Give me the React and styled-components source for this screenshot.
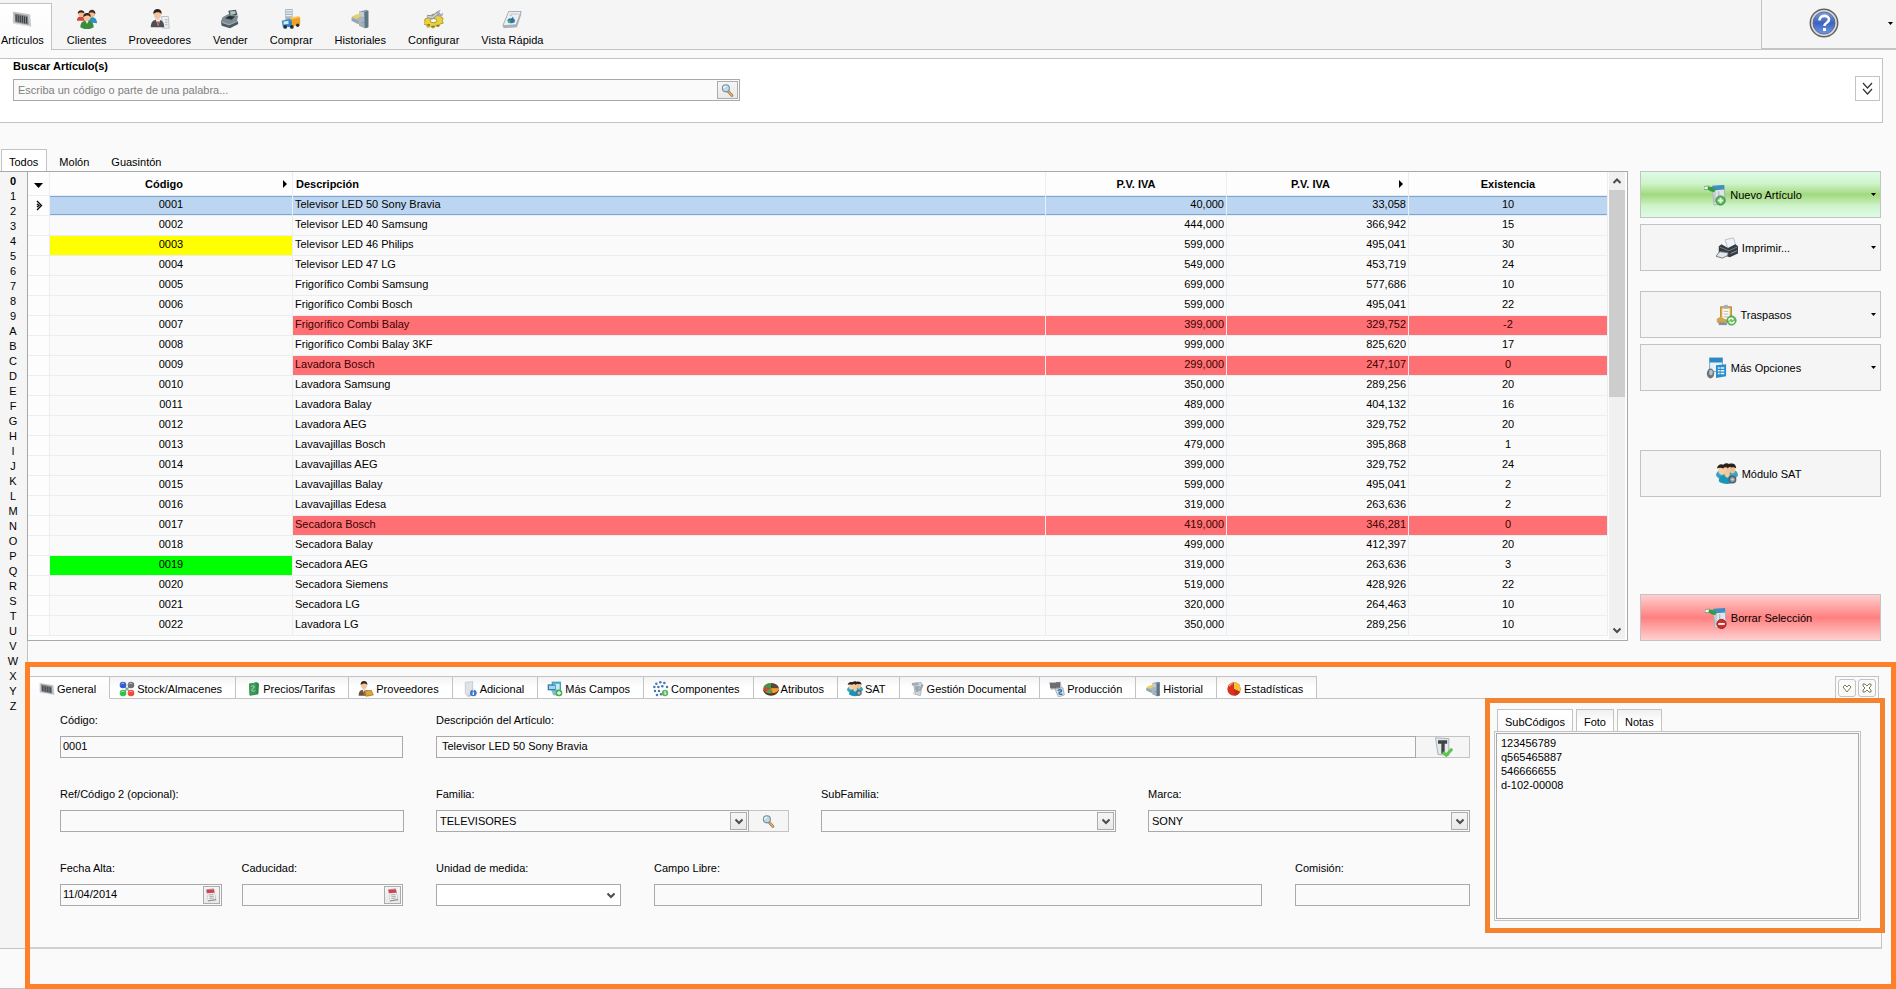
import React, { useState } from 'react';
import styled, { createGlobalStyle, css, ThemeProvider } from 'styled-components';

const theme = {
  page: '#fafafa',
  bar: '#f5f5f5',
  white: '#ffffff',
  line: '#c3c3c3',
  field: '#a9a9a9',
  cellLine: '#ebeef1',
  accent: '#ff8029',
  accentInner: '#f4822f',
  selected: '#bcd6f1',
  selectedLine: '#7ba6d6',
  red: '#ff7074',
  yellow: '#ffff00',
  green: '#00ff00'
};

const GlobalStyle = createGlobalStyle`
  * {
    box-sizing: border-box;
  }

  body {
    margin: 0;
    background: #fafafa;
    color: #000;
    font-family: 'Liberation Sans', Arial, sans-serif;
    font-size: 11px;
    line-height: 14px;
  }

  button, input, select {
    margin: 0;
    padding: 0;
    border: 0;
    border-radius: 0;
    background: none;
    color: inherit;
    font: inherit;
  }
`;

const Page = styled.div`
  display: flex;
  flex-direction: column;
  min-height: 100vh;
`;

/* ---------- top bar ---------- */

const TopBar = styled.header`
  display: flex;
  justify-content: space-between;
  height: 50px;
  background: ${props => props.theme.bar};
  border-bottom: 1px solid ${props => props.theme.line};
`;

const Menu = styled.nav`
  display: flex;
  padding-top: 3px;
`;

const MenuButton = styled.button`
  display: flex;
  flex-direction: column;
  align-items: center;
  gap: 4px;
  padding: 6px 11px 2px;

  ${props => props.$active && css`
    margin: 0 4px -1px 0;
    padding: 5px 7px 2px 1px;
    background: linear-gradient(#ffffff, #fafafa);
    border: 1px solid ${props.theme.line};
    border-left: 0;
    border-bottom: 0;
  `}
`;

const HelpButton = styled.button`
  display: flex;
  align-items: center;
  justify-content: space-between;
  width: 135px;
  height: 49px;
  padding: 0 3px 2px 47px;
  border-left: 1px solid ${props => props.theme.line};
  border-bottom: 1px solid ${props => props.theme.line};
`;

/* ---------- search ---------- */

const SearchPanel = styled.section`
  display: flex;
  justify-content: space-between;
  margin: 8px 13px 0 0;
  padding: 0 2px 21px 13px;
  background: ${props => props.theme.white};
  border: 1px solid ${props => props.theme.line};
  border-left: 0;
`;

const SearchColumn = styled.div`
  display: flex;
  flex-direction: column;
  gap: 6px;
  width: 727px;
`;

const SearchLabel = styled.label`
  font-weight: bold;
`;

const SearchBox = styled.div`
  display: flex;
  align-items: center;
  height: 22px;
  padding: 0 1px 0 4px;
  background: ${props => props.theme.page};
  border: 1px solid ${props => props.theme.field};

  input {
    flex: 1;
    min-width: 0;
    outline: none;
  }

  input::placeholder {
    color: #808080;
    opacity: 1;
  }
`;

const InsetButton = styled.button`
  display: flex;
  align-items: center;
  justify-content: center;
  width: ${props => props.$width || 17}px;
  height: 18px;
  background: linear-gradient(#f5f5f5, #e9e9e9);
  border: 1px solid #acacac;
`;

const ExpandButton = styled.button`
  display: flex;
  align-items: center;
  justify-content: center;
  width: 25px;
  height: 25px;
  margin-top: 17px;
  border: 1px solid ${props => props.theme.line};
`;

/* ---------- list area ---------- */

const FilterTabs = styled.div`
  display: flex;
  height: 22px;
  margin: 26px 0 0 1px;
`;

const FilterTab = styled.button`
  padding: 4px 10px 0 12px;

  ${props => props.$active && css`
    padding: 3px 8px 0 7px;
    background: ${props.theme.white};
    border: 1px solid ${props.theme.line};
    border-bottom: 0;
  `}
`;

const Workspace = styled.div`
  display: flex;
  flex: 1;
`;

const RailColumn = styled.div`
  display: flex;
  flex-direction: column;
  width: 27px;
`;

const Rail = styled.nav`
  display: flex;
  flex: 1;
  flex-direction: column;
  padding-top: 1px;
  background: ${props => props.theme.bar};
  border-top: 1px solid ${props => props.theme.field};
  border-bottom: 1px solid ${props => props.theme.line};
`;

const RailLetter = styled.button`
  height: 15px;
  padding-right: 1px;
  font-weight: ${props => (props.$active ? 'bold' : 'normal')};
`;

const RailFoot = styled.div`
  height: 40px;
  border-bottom: 1px solid ${props => props.theme.line};
`;

const Content = styled.main`
  display: flex;
  flex: 1;
  flex-direction: column;
  min-width: 0;
`;

const ListRow = styled.div`
  display: flex;
  gap: 12px;
  padding: 0 15px 21px 0;
  border-left: 1px solid ${props => props.theme.line};
`;

const GridFrame = styled.div`
  display: flex;
  flex: 1;
  gap: 1px;
  min-width: 0;
  margin-left: -1px;
  padding: 0 2px 4px 0;
  background: #fdfdfd;
  border: 1px solid ${props => props.theme.field};
`;

const Table = styled.table`
  flex: 1;
  width: 100%;
  border-spacing: 0;
  table-layout: fixed;
`;

const HeadCell = styled.th`
  height: 24px;
  padding: 0 3px;
  text-align: ${props => props.$align || 'center'};
  border-right: 1px solid ${props => props.theme.cellLine};
  border-bottom: 1px solid ${props => props.theme.cellLine};
`;

const HeadLabel = styled.div`
  display: flex;
  align-items: center;
  gap: 8px;
  padding-right: 2px;

  span {
    flex: 1;
  }
`;

const Row = styled.tr`
  background: ${props => props.theme.page};
`;

const Cell = styled.td`
  height: 20px;
  padding: 0 2px 2px;
  overflow: hidden;
  white-space: nowrap;
  line-height: 17px;
  text-align: ${props => props.$align || 'left'};
  background: ${props => props.theme[props.$fill] || 'transparent'};
  background-clip: padding-box;
  border-right: 1px solid ${props => props.theme.cellLine};
  border-bottom: 1px solid ${props => props.theme.cellLine};
  ${props => props.$fill === 'red' && 'color: #3a0000;'}
  ${props => props.$fill === 'selected' && css`
    box-shadow: inset 0 1px ${props.theme.selectedLine}, inset 0 -1px ${props.theme.selectedLine};
  `}
`;

const MarkerCell = styled.td`
  padding: 0;
  text-align: center;
  background: #fdfdfe;
  border-right: 1px solid ${props => props.theme.cellLine};
  border-bottom: 1px solid ${props => props.theme.cellLine};

  svg {
    display: block;
    margin: 0 auto;
  }
`;

const ScrollBar = styled.div`
  display: flex;
  flex-direction: column;
  align-items: center;
  justify-content: space-between;
  width: 16px;
  margin-bottom: -3px;
  background: #f0f0f0;
`;

const ScrollThumb = styled.div`
  width: 100%;
  height: 207px;
  margin-bottom: auto;
  background: #cdcdcd;
`;

const ScrollButton = styled.button`
  display: flex;
  align-items: center;
  justify-content: center;
  width: 16px;
  height: 18px;
`;

/* ---------- action column ---------- */

const Actions = styled.aside`
  display: flex;
  flex-direction: column;
  gap: 20px;
  width: 241px;
`;

const ActionGroup = styled.div`
  display: flex;
  flex-direction: column;
  gap: 6px;
  margin-top: ${props => props.$top || '0'};
`;

const tones = {
  green: 'linear-gradient(#dcfce6, #d0f4cc 25%, #a3d97e 50%, #d0f4cc 76%, #dcfce6)',
  red: 'linear-gradient(#ffcfcf, #ff8080 50%, #ffd0d0)'
};

const ActionButton = styled.button`
  display: flex;
  align-items: center;
  height: 47px;
  padding-right: 4px;
  background: ${props => tones[props.$tone] || props.theme.bar};
  border: 1px solid ${props => props.theme.line};
`;

const ActionLabel = styled.span`
  display: flex;
  flex: 1;
  align-items: center;
  justify-content: center;
  gap: 4px;
  padding-right: ${props => (props.$menu ? 6 : 0)}px;
`;

/* ---------- detail panel ---------- */

const DetailFrame = styled.section`
  display: flex;
  flex: 1;
  flex-direction: column;
  margin-left: -2px;
  padding: 9px 9px 35px 0;
  background: ${props => props.theme.page};
  border: 5px solid ${props => props.theme.accent};
`;

const DetailHead = styled.div`
  display: flex;
  align-items: flex-start;
  justify-content: space-between;
  height: 23px;
  padding-right: 3px;
  border-bottom: 1px solid ${props => props.theme.line};
`;

const DetailTabs = styled.div`
  display: flex;
`;

const DetailTab = styled.button`
  display: flex;
  align-items: center;
  gap: 2px;
  height: 23px;
  padding: 2px 13px 0 9px;
  white-space: nowrap;
  background: linear-gradient(#f3f3f3, #ffffff 50%);
  border: 1px solid ${props => props.theme.line};
  border-left: 0;

  ${props => props.$active && css`
    background: linear-gradient(#ffffff, ${props.theme.page});
    border-bottom-color: ${props.theme.page};
  `}
`;

const WindowButtons = styled.div`
  display: flex;
  gap: 2px;
  height: 23px;
  padding: 2px;
  border: 1px solid ${props => props.theme.line};
  border-bottom: 0;
`;

const WindowButton = styled.button`
  display: flex;
  align-items: center;
  justify-content: center;
  width: 18px;
  height: 18px;
  border: 1px solid ${props => props.theme.line};
  border-radius: 3px;
`;

const DetailBody = styled.div`
  display: flex;
  align-items: flex-start;
  flex: 1;
  border-right: 1px solid ${props => props.theme.line};
  border-bottom: 2px solid #d0d0d0;
`;

const Form = styled.form`
  display: flex;
  flex: 1;
  flex-direction: column;
  gap: 29px;
  min-width: 0;
  padding: 14px 15px 0 30px;
`;

const FormRow = styled.div`
  display: grid;
  grid-template-columns: ${props => props.$columns};
  gap: ${props => props.$gap || 33}px;
`;

const Field = styled.div`
  display: flex;
  flex-direction: column;
  gap: 9px;
  min-width: 0;
`;

const FieldLine = styled.div`
  display: flex;
  height: 22px;
`;

const Box = styled.div`
  display: flex;
  flex: 1;
  align-items: center;
  min-width: 0;
  padding: 0 1px 0 0;
  background: ${props => props.theme.page};
  border: 1px solid ${props => props.theme.field};
`;

const TextInput = styled.input`
  flex: 1;
  align-self: stretch;
  width: 100%;
  min-width: 0;
  padding: 0 ${props => props.$inset || 2}px 2px;
  outline: none;
`;

const Combo = styled.div`
  display: grid;
  flex: 1;
  align-items: center;
  min-width: 0;
  background: ${props => (props.$plain ? props.theme.white : props.theme.page)};
  border: 1px solid ${props => props.theme.field};

  > * {
    grid-area: 1 / 1;
  }
`;

const Select = styled.select`
  width: 100%;
  height: 20px;
  padding: 0 20px 0 3px;
  appearance: none;
  outline: none;
`;

const ComboArrow = styled.span`
  display: flex;
  align-items: center;
  justify-content: center;
  justify-self: end;
  width: 17px;
  height: 18px;
  margin-right: 1px;
  pointer-events: none;

  ${props => !props.$plain && css`
    background: linear-gradient(#f5f5f5, #e9e9e9);
    border: 1px solid #acacac;
  `}
`;

const SideButton = styled.button`
  display: flex;
  align-items: center;
  justify-content: center;
  width: ${props => props.$width}px;
  background: ${props => props.theme.bar};
  border: 1px solid ${props => props.theme.line};
  border-left: 0;
`;

const SubFrame = styled.div`
  width: 400px;
  margin: -1px -4px 13px 0;
  padding: 6px 19px 7px 4px;
  background: ${props => props.theme.page};
  border: 5px solid ${props => props.theme.accentInner};
`;

const SubTabs = styled.div`
  display: flex;
  gap: 3px;
  padding-left: 3px;
`;

const SubTab = styled.button`
  height: 22px;
  padding: 3px 7px 0;
  background: linear-gradient(${props => (props.$active ? '#ffffff, #fafafa' : '#f0f0f0, #ffffff 60%')});
  border: 1px solid ${props => props.theme.line};
  border-bottom: 0;
`;

const SubList = styled.ul`
  height: 190px;
  margin: 0;
  padding: 4px 6px;
  list-style: none;
  border: 1px solid ${props => props.theme.line};
  box-shadow: inset 0 0 0 1px ${props => props.theme.page}, inset 0 0 0 2px ${props => props.theme.field};
`;

/* ---------- icons ---------- */

const Svg = ({ size = 20, box = 24, children }) => (
  <svg width={size} height={size} viewBox={`0 0 ${box} ${box}`} aria-hidden="true">
    {children}
  </svg>
);

const BarcodeIcon = ({ size }) => (
  <Svg size={size}>
    <path d="M1 3l19 3c1 0 2 1 2 2l1 12c0 1-1 1-2 1L3 18c-1 0-2-1-2-2z" fill="#c6c9cc" />
    <path d="M3 5l16 3 1 11L4 16z" fill="#84888c" />
    <path d="M5 7v8M7.500 7.500v8M10 8v8M12.500 8.500v8M15 9v8M17.500 9.500v8" stroke="#3a3e41" strokeWidth="1.300" />
    <path d="M2 17l19 3v1L3 18z" fill="#f0f1f2" />
  </Svg>
);

const PeopleIcon = ({ size }) => (
  <Svg size={size}>
    <path d="M0 14c0-4 2-5 5-5s5 2 5 5z" fill="#d6433a" />
    <circle cx="5" cy="6" r="3.500" fill="#f0bd92" />
    <path d="M1 6c-1-6 8-6 8-1-3-1-6-1-8 1z" fill="#33211a" />
    <path d="M13 16c0-5 2-6 5-6s6 2 6 7z" fill="#2b93c6" />
    <circle cx="18" cy="6" r="3.800" fill="#f0bd92" />
    <path d="M14 6c-1-7 9-7 8 0-2-2-6-3-8 0z" fill="#4a2c1b" />
    <path d="M4 22c0-6 3-8 8-8s8 2 8 8c-4 3-12 3-16 0z" fill="#3b8d3a" />
    <path d="M10 14h4l-2 4z" fill="#e9f2e4" />
    <circle cx="12" cy="10" r="4.200" fill="#f6c79d" />
    <path d="M7.500 10c-1-7 10-7 9 0-2-3-6-3-9 0z" fill="#3c2419" />
  </Svg>
);

const ManIcon = ({ size, box }) => (
  <Svg size={size}>
    {!box && <path d="M14 9h8l1 14h-8z" fill="#eef0f2" stroke="#b4b8bc" />}
    <path d="M1 22c0-6 2-9 8-9s8 3 8 9z" fill={box ? '#6a553f' : '#4c4e55'} />
    <path d="M7 13h5l-2 8z" fill="#fff" />
    <path d="M9.500 14l1.500 2-1 5-1.500-5z" fill="#c83a2f" />
    <ellipse cx="9" cy="6.500" rx="4.500" ry="5.500" fill="#f3c39a" />
    <path d="M4 6c-1-8 11-8 10 0-2-3-7-3-10 0z" fill="#2e221d" />
    {!box && <path d="M18 13h3M18 16h3M18 19h3" stroke="#a0a4a8" />}
    {box && <path d="M10 15l10-1 3 7-11 2z" fill="#dba63a" stroke="#9a6d1c" />}
  </Svg>
);

const RegisterIcon = ({ size }) => (
  <Svg size={size}>
    <path d="M10 2l9-1 2 6-9 3z" fill="#4a555c" />
    <path d="M12 3l6-.500 1 3-6 2z" fill="#a5cfc0" />
    <path d="M3 10l7-4 12 2-2 7-9 3-10-3z" fill="#7c8a92" />
    <path d="M6 11l5-3 7 1-4 4z" fill="#2d3439" />
    <path d="M1 15l10 3 10-4 1 4-10 5-10-3z" fill="#4b5962" />
    <path d="M2 16l9 3 9-4" stroke="#c4cdd2" fill="none" />
  </Svg>
);

const TruckIcon = ({ size }) => (
  <Svg size={size}>
    <path d="M5 0h9v13H5z" fill="#a9b6c1" />
    <path d="M6 2h7M6 5h7M6 8h7" stroke="#e9eff4" strokeWidth="1.500" />
    <path d="M11 10l10-1 2 1v9l-11 2z" fill="#eda129" />
    <path d="M11 10l10-1 2 1-10 2z" fill="#f8cd6c" />
    <path d="M1 14l9-2 3 2v8l-11-1z" fill="#2d86c9" />
    <path d="M3 15l6-1v4l-6 .500z" fill="#cdeafa" />
    <circle cx="5" cy="21.500" r="2.300" fill="#2a2d30" />
    <circle cx="13" cy="21.500" r="2.300" fill="#2a2d30" />
    <circle cx="20" cy="19.500" r="2" fill="#2a2d30" />
  </Svg>
);

const CabinetIcon = ({ size }) => (
  <Svg size={size}>
    <path d="M11 3l9-2 2 1v20l-4 1-7-3z" fill="#8b9ba6" />
    <path d="M17 4l5-2v20l-4 1z" fill="#5e7684" />
    <path d="M11 3l6 1v6h-6z" fill="#c2ccd2" />
    <path d="M2 10l9-2 6 2v5l-7 3-8-4z" fill="#a8b7c0" />
    <path d="M2 9l7-3 5 2-6 4z" fill="#ecce62" />
    <path d="M2 11l8 3v4l-8-4z" fill="#8fa5b2" />
    <path d="M12 16l5 1v5l-5-2z" fill="#a3b2bb" />
  </Svg>
);

const GearWrenchIcon = ({ size }) => (
  <Svg size={size}>
    <path d="M1 12l3-1 0-3 4 0 3-2 3 2 4-1 2 3 3 1-1 3 1 3-4 1-1 3-4-1-3 3-3-2-4 1-1-3-4-1 2-3z" fill="#ead23c" stroke="#a8941f" />
    <path d="M4 19h3M9 21h4M15 20h3" stroke="#8b7a17" strokeWidth="2" />
    <ellipse cx="11.500" cy="14" rx="4" ry="2.500" fill="#fafafa" stroke="#94811b" />
    <path d="M4 9l6 1 8-6" stroke="#858c92" strokeWidth="4" fill="none" />
    <path d="M4 9l6 1 8-6" stroke="#cfd4d8" strokeWidth="2" fill="none" />
    <path d="M15 3l5-2-2 4 3 1 2-2-1 5-5 0z" fill="#a4abb0" />
  </Svg>
);

const QuickViewIcon = ({ size }) => (
  <Svg size={size}>
    <path d="M8 3l15 0-6 16-16 1z" fill="#eceef0" stroke="#9aa2a8" />
    <path d="M1 20l16-1 6-16v4l-5 15-16 1z" fill="#a9b1b8" />
    <path d="M10 6h10M9 8h3" stroke="#b5bcc2" />
    <ellipse cx="11" cy="14" rx="4.500" ry="3" fill="#2878b8" />
    <path d="M7 14c2-2 4 1 3 3-2 0-3-1-3-3z" fill="#49b556" />
    <path d="M10 14l3-5 2 5z" fill="#3a6f9c" />
  </Svg>
);

const HelpIcon = () => (
  <svg width="30" height="30" viewBox="0 0 30 30" aria-hidden="true">
    <defs>
      <linearGradient id="help-blue" x1="0" y1="0" x2="0" y2="1">
        <stop offset="0" stopColor="#7f9fe0" />
        <stop offset="0.5" stopColor="#3b62bd" />
        <stop offset="1" stopColor="#6f9bea" />
      </linearGradient>
    </defs>
    <circle cx="15" cy="15" r="13.700" fill="#dcdcdc" stroke="#636363" strokeWidth="1.500" />
    <circle cx="15" cy="15" r="11" fill="url(#help-blue)" stroke="#5c6d94" />
    <path d="M10.500 12.500c0-6 9.500-6 9.500-1 0 3.500-4.500 3-4.500 6.500" fill="none" stroke="#fff" strokeWidth="2.600" />
    <rect x="14" y="20" width="3" height="3" fill="#fff" />
  </svg>
);

const MagnifierIcon = ({ size = 13 }) => (
  <Svg size={size}>
    <path d="M13 13l7 8" stroke="#8a6a3c" strokeWidth="5" strokeLinecap="round" />
    <path d="M13 13l7 8" stroke="#d9b06a" strokeWidth="3" strokeLinecap="round" />
    <circle cx="9" cy="8" r="6.500" fill="#b9dcec" stroke="#7f8c94" strokeWidth="2" />
    <path d="M5 8c0-3 2-4 4-4" stroke="#fff" strokeWidth="2" fill="none" />
  </Svg>
);

const DocBase = () => (
  <>
    <path d="M9 3l13-1 1 18-12 3z" fill="#dfe5e9" stroke="#a2aeb6" />
    <path d="M9 2l13-1v5l-13 1z" fill="#3f8fc0" />
    <path d="M12 8v12M16 8v11" stroke="#b6c1c8" strokeWidth="1.500" />
    <path d="M0 3l5-1 0 4-5 0z" fill="#f5f8f5" stroke="#7ba37f" />
    <path d="M4 3l4 0 5 3-2 3-4-1-3-2z" fill="#349c42" />
  </>
);

const NewItemIcon = ({ size }) => (
  <Svg size={size}>
    <DocBase />
    <circle cx="18" cy="18" r="5" fill="#5bb95c" stroke="#2b8a30" />
    <path d="M18 15v6M15 18h6" stroke="#e6ffe6" strokeWidth="2" />
  </Svg>
);

const DeleteItemIcon = ({ size }) => (
  <Svg size={size}>
    <DocBase />
    <circle cx="18" cy="18.500" r="5" fill="#d62c2c" stroke="#961c1c" />
    <path d="M14.500 18.500h7" stroke="#fff" strokeWidth="2" />
  </Svg>
);

const PrinterIcon = ({ size }) => (
  <Svg size={size}>
    <path d="M10 3l9-2 3 9-9 3z" fill="#eef3f8" stroke="#b3bcc4" />
    <path d="M3 10l3-2 7 4 8-4 3 2v8l-9 4-12-4z" fill="#343b43" />
    <path d="M4 11l10 4 9-4" stroke="#76828c" fill="none" />
    <path d="M4 16l9 1 0 3-6 3-7-2z" fill="#e2e7ec" stroke="#6b747c" />
    <path d="M16 18l7-3" stroke="#97a2ab" />
  </Svg>
);

const TransferIcon = ({ size }) => (
  <Svg size={size}>
    <path d="M6 3h12l0 16H6z" fill="#dcaa58" stroke="#b58a45" />
    <path d="M8 5h8v12H8z" fill="#fbfaf3" />
    <path d="M10 1h4v4h-4z" fill="#a9aeb2" />
    <path d="M9.500 8h5M9.500 11h5M9.500 14h5" stroke="#b3b3ab" />
    <path d="M2 16l4-2 6 3v3l-6 2-4-2z" fill="#d3a54e" />
    <path d="M4 20h9v3H4z" fill="#84919a" />
    <circle cx="18" cy="18" r="5" fill="#6cc463" stroke="#3f9a3b" />
    <path d="M15 18c0-3 4-3 5-1M21 19c-1 2-4 3-5 0" stroke="#fff" strokeWidth="1.500" fill="none" />
  </Svg>
);

const OptionsIcon = ({ size }) => (
  <Svg size={size}>
    <path d="M5 1h14v15H5z" fill="#e6f2f9" stroke="#6ea4c2" />
    <path d="M5 1h14v5H5z" fill="#2c89c2" />
    <path d="M12 9l11-1v13l-11 2z" fill="#2b8cca" />
    <path d="M14 12h2M14 15h2M14 18h2M17 12h4M17 15h4M17 18h4" stroke="#e8f6ff" strokeWidth="1.500" />
    <ellipse cx="6" cy="18" rx="4" ry="5.500" fill="#6d757a" />
    <ellipse cx="6.500" cy="17" rx="2" ry="3" fill="#b9c2c8" />
  </Svg>
);

const TeamIcon = ({ size }) => (
  <Svg size={size}>
    <path d="M0 14c0-4 3-6 6-6h12c4 0 6 2 6 6l-3 3H3z" fill="#35a5c8" />
    <ellipse cx="18" cy="7" rx="3" ry="4.500" fill="#efbd91" />
    <ellipse cx="12.500" cy="7" rx="3" ry="5" fill="#f3c59c" />
    <ellipse cx="6.500" cy="8" rx="4" ry="5" fill="#f7cda6" />
    <path d="M1 6c1-5 5-5 7-4 2-2 5-2 6-1 4-1 8 0 8 5-1-1-3-2-5-1-1-1-3-1-4 1-1-2-4-2-5 0-2-1-5-1-7 0z" fill="#2a201c" />
    <path d="M3 20c0-5 3-7 9-7s9 2 9 7c-4 4-14 4-18 0z" fill="#1a95b7" />
    <path d="M9 11c0-2 6-2 6 1s-2 4-3 4-3-2-3-5z" fill="#f5c8a0" />
    <circle cx="18" cy="18" r="3.500" fill="#8d9ba4" stroke="#52616a" strokeWidth="1.500" />
    <circle cx="18" cy="18" r="1.200" fill="#d6dde1" />
  </Svg>
);

const StockIcon = ({ size }) => (
  <Svg size={size}>
    <path d="M6 6l12 12M18 6L6 18" stroke="#9a9a9a" strokeWidth="2" />
    <circle cx="6" cy="6" r="5" fill="#2f5fd0" />
    <circle cx="18" cy="6" r="5" fill="#6c7177" />
    <circle cx="6" cy="18" r="5" fill="#34c047" />
    <circle cx="18" cy="18" r="5" fill="#ef4b3b" />
    <path d="M3 5c1-2 4-2 5-1M15 5c1-2 4-2 5-1M3 17c1-2 4-2 5-1M15 17c1-2 4-2 5-1" stroke="#fff" strokeOpacity="0.600" strokeWidth="1.500" fill="none" />
  </Svg>
);

const PriceIcon = ({ size }) => (
  <Svg size={size}>
    <path d="M6 4l12-2 3 2-1 16-13 2z" fill="#2d8748" />
    <path d="M6 4l11-2v17L7 21z" fill="#3b9a58" />
    <path d="M9 9c2-3 5-2 5 0s-5 3-4 5 4 2 5 0" stroke="#b9e3c3" strokeWidth="1.500" fill="none" />
  </Svg>
);

const ExtraIcon = ({ size }) => (
  <Svg size={size}>
    <path d="M5 2l11-1v17l-8 4-3-3z" fill="#dfe3e8" stroke="#b6bdc4" />
    <path d="M5 19l3 3 8-3v3l-7 2z" fill="#b9c2ca" />
    <circle cx="17" cy="18" r="5" fill="#3e78c9" />
    <path d="M17 17v4M17 14v1.500" stroke="#fff" strokeWidth="2" />
  </Svg>
);

const FieldsIcon = ({ size }) => (
  <Svg size={size}>
    <path d="M7 1h14v15H7z" fill="#3fa2bd" />
    <path d="M9 4h10v9H9z" fill="#c6ebf4" />
    <path d="M1 5h12v9H1z" fill="#317fb2" />
    <path d="M3 7h9v5H3z" fill="#a9d5ea" />
    <path d="M7 14h12v9L9 21z" fill="#7bbccb" />
    <circle cx="18" cy="18" r="5" fill="#46ad4c" />
    <path d="M18 15v6M15 18h6" stroke="#e6ffe6" strokeWidth="2" />
  </Svg>
);

const DotsIcon = ({ size }) => (
  <Svg size={size}>
    {[[5, 4], [11, 2], [17, 3], [2, 9], [8, 9], [14, 8], [21, 9], [3, 15], [9, 15], [6, 21], [12, 20]].map(([x, y]) => (
      <circle key={`${x}-${y}`} cx={x} cy={y} r="1.900" fill="#4876b8" />
    ))}
    <circle cx="18" cy="18" r="4.800" fill="#5db85e" />
    <path d="M18 15v5l2-1" stroke="#fff" strokeWidth="1.500" fill="none" />
  </Svg>
);

const AttributesIcon = ({ size }) => (
  <Svg size={size}>
    <ellipse cx="12" cy="14" rx="11.500" ry="8" fill="#5d2f1d" />
    <ellipse cx="12" cy="11" rx="11.500" ry="7.500" fill="#d9442f" />
    <path d="M12 11L1 9c2-4 6-6 11-5.500z" fill="#3c9a4b" />
    <path d="M12 11V3.500c6 0 11 3 11.500 7z" fill="#5b463a" />
    <path d="M12 11l11.500 0c0 4-4 7-9 7.500z" fill="#e8a32e" />
    <path d="M12 11L3 16c2 2 6 3 10 2.500z" fill="#4ba852" />
  </Svg>
);

const DocsIcon = ({ size }) => (
  <Svg size={size}>
    <path d="M7 4l11-2 2 4-3 16-8-2z" fill="#cdd5da" stroke="#9ba7af" />
    <path d="M4 3l9-1 2 4-10 1z" fill="#9fadb6" />
    <path d="M9 9h7M9 12h6M10 15h4" stroke="#6d7b85" strokeWidth="1.500" />
    <path d="M19 5l3 1-5 9-3 0z" fill="#9aa7b0" />
    <path d="M5 18l4-2v5z" fill="#cdd5da" />
  </Svg>
);

const ProductionIcon = ({ size }) => (
  <Svg size={size}>
    <path d="M0 2l18-1 1 10-16 2z" fill="#b4b8bc" />
    <path d="M3 3v8M6 3v8M9 3v8M12 2v8M15 2v8" stroke="#2a2e32" strokeWidth="1.600" />
    <path d="M9 12l12-2 2 11-9 3z" fill="#d9e3ea" stroke="#8598a6" />
    <path d="M13 15c2-3 6-2 6 0s-4 1-4 3 3 3 5 1" stroke="#2f6ea3" strokeWidth="2" fill="none" />
  </Svg>
);

const StatsIcon = ({ size }) => (
  <Svg size={size}>
    <circle cx="12" cy="12" r="10" fill="#d9321f" />
    <path d="M12 12V2a10 10 0 0 1 9 14z" fill="#f4c430" />
    <path d="M12 12l9 4a10 10 0 0 1-8 6z" fill="#c22a1a" />
    <path d="M5 8c1-3 3-4 5-4" stroke="#ff9d8d" strokeWidth="2" fill="none" />
  </Svg>
);

const CalendarIcon = () => (
  <Svg size={14}>
    <path d="M4 2l13-1 4 20-14 2z" fill="#8d9398" />
    <path d="M4 3l13-1 3 17-13 2z" fill="#f1f1f1" />
    <path d="M4 3l13-1 1 6-13 1z" fill="#cf4450" />
    <path d="M8 12l8-1M9 15l8-1M9 18l8-1" stroke="#a4a4a4" strokeWidth="1.500" />
  </Svg>
);

const TextCheckIcon = () => (
  <Svg size={20}>
    <path d="M3 1l16 1v20l-13-1z" fill="#e6e9ec" stroke="#9ea6ac" />
    <path d="M6 4h11v4h-3v12h-4V8H6z" fill="#3f4448" />
    <path d="M12 18l4 4 7-8" stroke="#5cc44f" strokeWidth="3.500" fill="none" />
  </Svg>
);

const Caret = () => (
  <svg width="5" height="3" viewBox="0 0 5 3" aria-hidden="true">
    <path d="M0 0h5L2.500 3z" fill="#000" />
  </svg>
);

const SortArrow = () => (
  <svg width="4" height="8" viewBox="0 0 4 8" aria-hidden="true">
    <path d="M0 0l4 4-4 4z" fill="#000" />
  </svg>
);

const Chevron = ({ up }) => (
  <svg width="8" height="7" viewBox="0 0 8 7" aria-hidden="true">
    <path d={up ? 'M0.500 5L4 1.500 7.500 5' : 'M0.500 1.500L4 5 7.500 1.500'} fill="none" stroke="#4d4d4d" strokeWidth="2" />
  </svg>
);

/* ---------- data ---------- */

const menuItems = [
  ['Artículos', BarcodeIcon],
  ['Clientes', PeopleIcon],
  ['Proveedores', ManIcon],
  ['Vender', RegisterIcon],
  ['Comprar', TruckIcon],
  ['Historiales', CabinetIcon],
  ['Configurar', GearWrenchIcon],
  ['Vista Rápida', QuickViewIcon]
];

const letters = '0123456789ABCDEFGHIJKLMNOPQRSTUVWXYZ'.split('');

const articles = [
  ['0001', 'Televisor LED 50 Sony Bravia', '40,000', '33,058', '10'],
  ['0002', 'Televisor LED 40 Samsung', '444,000', '366,942', '15'],
  ['0003', 'Televisor LED 46 Philips', '599,000', '495,041', '30', 'yellow'],
  ['0004', 'Televisor LED 47 LG', '549,000', '453,719', '24'],
  ['0005', 'Frigorífico Combi Samsung', '699,000', '577,686', '10'],
  ['0006', 'Frigorífico Combi Bosch', '599,000', '495,041', '22'],
  ['0007', 'Frigorífico Combi Balay', '399,000', '329,752', '-2'],
  ['0008', 'Frigorífico Combi Balay 3KF', '999,000', '825,620', '17'],
  ['0009', 'Lavadora Bosch', '299,000', '247,107', '0'],
  ['0010', 'Lavadora Samsung', '350,000', '289,256', '20'],
  ['0011', 'Lavadora Balay', '489,000', '404,132', '16'],
  ['0012', 'Lavadora AEG', '399,000', '329,752', '20'],
  ['0013', 'Lavavajillas Bosch', '479,000', '395,868', '1'],
  ['0014', 'Lavavajillas AEG', '399,000', '329,752', '24'],
  ['0015', 'Lavavajillas Balay', '599,000', '495,041', '2'],
  ['0016', 'Lavavajillas Edesa', '319,000', '263,636', '2'],
  ['0017', 'Secadora Bosch', '419,000', '346,281', '0'],
  ['0018', 'Secadora Balay', '499,000', '412,397', '20'],
  ['0019', 'Secadora AEG', '319,000', '263,636', '3', 'green'],
  ['0020', 'Secadora Siemens', '519,000', '428,926', '22'],
  ['0021', 'Secadora LG', '320,000', '264,463', '10'],
  ['0022', 'Lavadora LG', '350,000', '289,256', '10']
];

const detailTabs = [
  ['General', BarcodeIcon],
  ['Stock/Almacenes', StockIcon],
  ['Precios/Tarifas', PriceIcon],
  ['Proveedores', props => <ManIcon {...props} box />],
  ['Adicional', ExtraIcon],
  ['Más Campos', FieldsIcon],
  ['Componentes', DotsIcon],
  ['Atributos', AttributesIcon],
  ['SAT', TeamIcon],
  ['Gestión Documental', DocsIcon],
  ['Producción', ProductionIcon],
  ['Historial', CabinetIcon],
  ['Estadísticas', StatsIcon]
];

const subCodes = ['123456789', 'q565465887', '546666655', 'd-102-00008'];

/* ---------- parts ---------- */

const Action = ({ icon: Icon, label, tone, menu }) => (
  <ActionButton $tone={tone} type="button">
    <ActionLabel $menu={menu}>
      <Icon size={22} />
      {label}
    </ActionLabel>
    {menu && <Caret />}
  </ActionButton>
);

const TextField = ({ id, label, value = '', inset, button, side }) => (
  <Field>
    <label htmlFor={id}>{label}</label>
    <FieldLine>
      <Box>
        <TextInput id={id} type="text" defaultValue={value} $inset={inset} />
        {button}
      </Box>
      {side}
    </FieldLine>
  </Field>
);

const SelectField = ({ id, label, value = '', plain, side }) => (
  <Field>
    <label htmlFor={id}>{label}</label>
    <FieldLine>
      <Combo $plain={plain}>
        <Select id={id} defaultValue={value}>
          <option value={value}>{value}</option>
        </Select>
        <ComboArrow $plain={plain}>
          <Chevron />
        </ComboArrow>
      </Combo>
      {side}
    </FieldLine>
  </Field>
);

const DateButton = () => (
  <InsetButton type="button" aria-label="Calendario">
    <CalendarIcon />
  </InsetButton>
);

const ArticleTable = ({ selected, onSelect }) => (
  <Table>
    <colgroup>
      <col style={{ width: 22 }} />
      <col style={{ width: 243 }} />
      <col />
      <col style={{ width: 181 }} />
      <col style={{ width: 182 }} />
      <col style={{ width: 199 }} />
    </colgroup>
    <thead>
      <tr>
        <HeadCell>
          <svg width="9" height="5" viewBox="0 0 9 5" aria-hidden="true">
            <path d="M0 0h9L4.500 5z" />
          </svg>
        </HeadCell>
        <HeadCell>
          <HeadLabel>
            <span>Código</span>
            <SortArrow />
          </HeadLabel>
        </HeadCell>
        <HeadCell $align="left">Descripción</HeadCell>
        <HeadCell>P.V. IVA</HeadCell>
        <HeadCell>
          <HeadLabel>
            <span>P.V. IVA</span>
            <SortArrow />
          </HeadLabel>
        </HeadCell>
        <HeadCell>Existencia</HeadCell>
      </tr>
    </thead>
    <tbody>
      {articles.map(([code, name, price, net, stock, mark]) => {
        const active = code === selected;
        const fill = active ? 'selected' : Number(stock) <= 0 ? 'red' : undefined;
        return (
          <Row key={code} onClick={() => onSelect(code)}>
            <MarkerCell>
              {active && (
                <svg width="8" height="11" viewBox="0 0 8 11" aria-hidden="true">
                  <path d="M2 1l4.500 4.500L2 10M2 4l2 1.500L2 7" fill="none" stroke="#000" strokeWidth="1.300" />
                </svg>
              )}
            </MarkerCell>
            <Cell $align="center" $fill={active ? 'selected' : mark}>{code}</Cell>
            <Cell $fill={fill}>{name}</Cell>
            <Cell $align="right" $fill={fill}>{price}</Cell>
            <Cell $align="right" $fill={fill}>{net}</Cell>
            <Cell $align="center" $fill={fill}>{stock}</Cell>
          </Row>
        );
      })}
    </tbody>
  </Table>
);

const DetailForm = () => (
  <Form onSubmit={e => e.preventDefault()}>
    <FormRow $columns="343px 1fr">
      <TextField id="codigo" label="Código:" value="0001" />
      <TextField
        id="descripcion"
        label="Descripción del Artículo:"
        value="Televisor LED 50 Sony Bravia"
        inset={5}
        side={<SideButton type="button" $width={54} aria-label="Editar texto"><TextCheckIcon /></SideButton>}
      />
    </FormRow>
    <FormRow $columns="344px 353fr 295fr 322fr" $gap={32}>
      <TextField id="ref" label="Ref/Código 2 (opcional):" />
      <SelectField
        id="familia"
        label="Familia:"
        value="TELEVISORES"
        side={<SideButton type="button" $width={40} aria-label="Buscar familia"><MagnifierIcon /></SideButton>}
      />
      <SelectField id="subfamilia" label="SubFamilia:" />
      <SelectField id="marca" label="Marca:" value="SONY" />
    </FormRow>
    <FormRow $columns="343px 185px 1fr 175px">
      <FormRow $columns="1fr 1fr" $gap={20}>
        <TextField id="fecha" label="Fecha Alta:" value="11/04/2014" button={<DateButton />} />
        <TextField id="caducidad" label="Caducidad:" button={<DateButton />} />
      </FormRow>
      <SelectField id="unidad" label="Unidad de medida:" plain />
      <TextField id="libre" label="Campo Libre:" />
      <TextField id="comision" label="Comisión:" />
    </FormRow>
  </Form>
);

const App = () => {
  const [selected, setSelected] = useState('0001');
  const [tab, setTab] = useState('General');

  return (
    <ThemeProvider theme={theme}>
      <GlobalStyle />
      <Page>
        <TopBar>
          <Menu>
            {menuItems.map(([label, Icon], index) => (
              <MenuButton key={label} type="button" $active={index === 0}>
                <Icon size={20} />
                {label}
              </MenuButton>
            ))}
          </Menu>
          <HelpButton type="button" aria-label="Ayuda">
            <HelpIcon />
            <Caret />
          </HelpButton>
        </TopBar>

        <SearchPanel>
          <SearchColumn>
            <SearchLabel htmlFor="buscar">Buscar Artículo(s)</SearchLabel>
            <SearchBox>
              <input id="buscar" type="text" placeholder="Escriba un código o parte de una palabra..." />
              <InsetButton type="button" $width={21} aria-label="Buscar">
                <MagnifierIcon />
              </InsetButton>
            </SearchBox>
          </SearchColumn>
          <ExpandButton type="button" aria-label="Más filtros">
            <svg width="11" height="14" viewBox="0 0 11 14" aria-hidden="true">
              <path d="M1 1l4.500 5L10 1M1 7l4.500 5L10 7" fill="none" stroke="#333" strokeWidth="1.200" />
            </svg>
          </ExpandButton>
        </SearchPanel>

        <FilterTabs>
          <FilterTab type="button" $active>Todos</FilterTab>
          <FilterTab type="button">Molón</FilterTab>
          <FilterTab type="button">Guasintón</FilterTab>
        </FilterTabs>

        <Workspace>
          <RailColumn>
            <Rail>
              {letters.map(letter => (
                <RailLetter key={letter} type="button" $active={letter === '0'}>{letter}</RailLetter>
              ))}
            </Rail>
            <RailFoot />
          </RailColumn>

          <Content>
            <ListRow>
              <GridFrame>
                <ArticleTable selected={selected} onSelect={setSelected} />
                <ScrollBar>
                  <ScrollButton type="button" aria-label="Subir"><Chevron up /></ScrollButton>
                  <ScrollThumb />
                  <ScrollButton type="button" aria-label="Bajar"><Chevron /></ScrollButton>
                </ScrollBar>
              </GridFrame>
              <Actions>
                <ActionGroup>
                  <Action icon={NewItemIcon} label="Nuevo Artículo" tone="green" menu />
                  <Action icon={PrinterIcon} label="Imprimir..." menu />
                </ActionGroup>
                <ActionGroup>
                  <Action icon={TransferIcon} label="Traspasos" menu />
                  <Action icon={OptionsIcon} label="Más Opciones" menu />
                </ActionGroup>
                <ActionGroup $top="39px">
                  <Action icon={TeamIcon} label="Módulo SAT" />
                </ActionGroup>
                <ActionGroup $top="auto">
                  <Action icon={DeleteItemIcon} label="Borrar Selección" tone="red" />
                </ActionGroup>
              </Actions>
            </ListRow>

            <DetailFrame>
              <DetailHead>
                <DetailTabs>
                  {detailTabs.map(([label, Icon]) => (
                    <DetailTab key={label} type="button" $active={tab === label} onClick={() => setTab(label)}>
                      <Icon size={16} />
                      {label}
                    </DetailTab>
                  ))}
                </DetailTabs>
                <WindowButtons>
                  <WindowButton type="button" aria-label="Minimizar">
                    <svg width="10" height="9" viewBox="0 0 10 9" aria-hidden="true">
                      <path d="M1 3l2-2 2 2 2-2 2 2-4 5z" fill="#fff" stroke="#7d7a52" />
                    </svg>
                  </WindowButton>
                  <WindowButton type="button" aria-label="Cerrar">
                    <svg width="10" height="10" viewBox="0 0 10 10" aria-hidden="true">
                      <path d="M1 1h2l2 2 2-2h2v2L7 5l2 2v2H7L5 7 3 9H1V7l2-2-2-2z" fill="#fff" stroke="#7d7a52" />
                    </svg>
                  </WindowButton>
                </WindowButtons>
              </DetailHead>
              <DetailBody>
                <DetailForm />
                <SubFrame>
                  <SubTabs>
                    <SubTab type="button" $active>SubCódigos</SubTab>
                    <SubTab type="button">Foto</SubTab>
                    <SubTab type="button">Notas</SubTab>
                  </SubTabs>
                  <SubList>
                    {subCodes.map(code => (
                      <li key={code}>{code}</li>
                    ))}
                  </SubList>
                </SubFrame>
              </DetailBody>
            </DetailFrame>
          </Content>
        </Workspace>
      </Page>
    </ThemeProvider>
  );
};

export default App;
